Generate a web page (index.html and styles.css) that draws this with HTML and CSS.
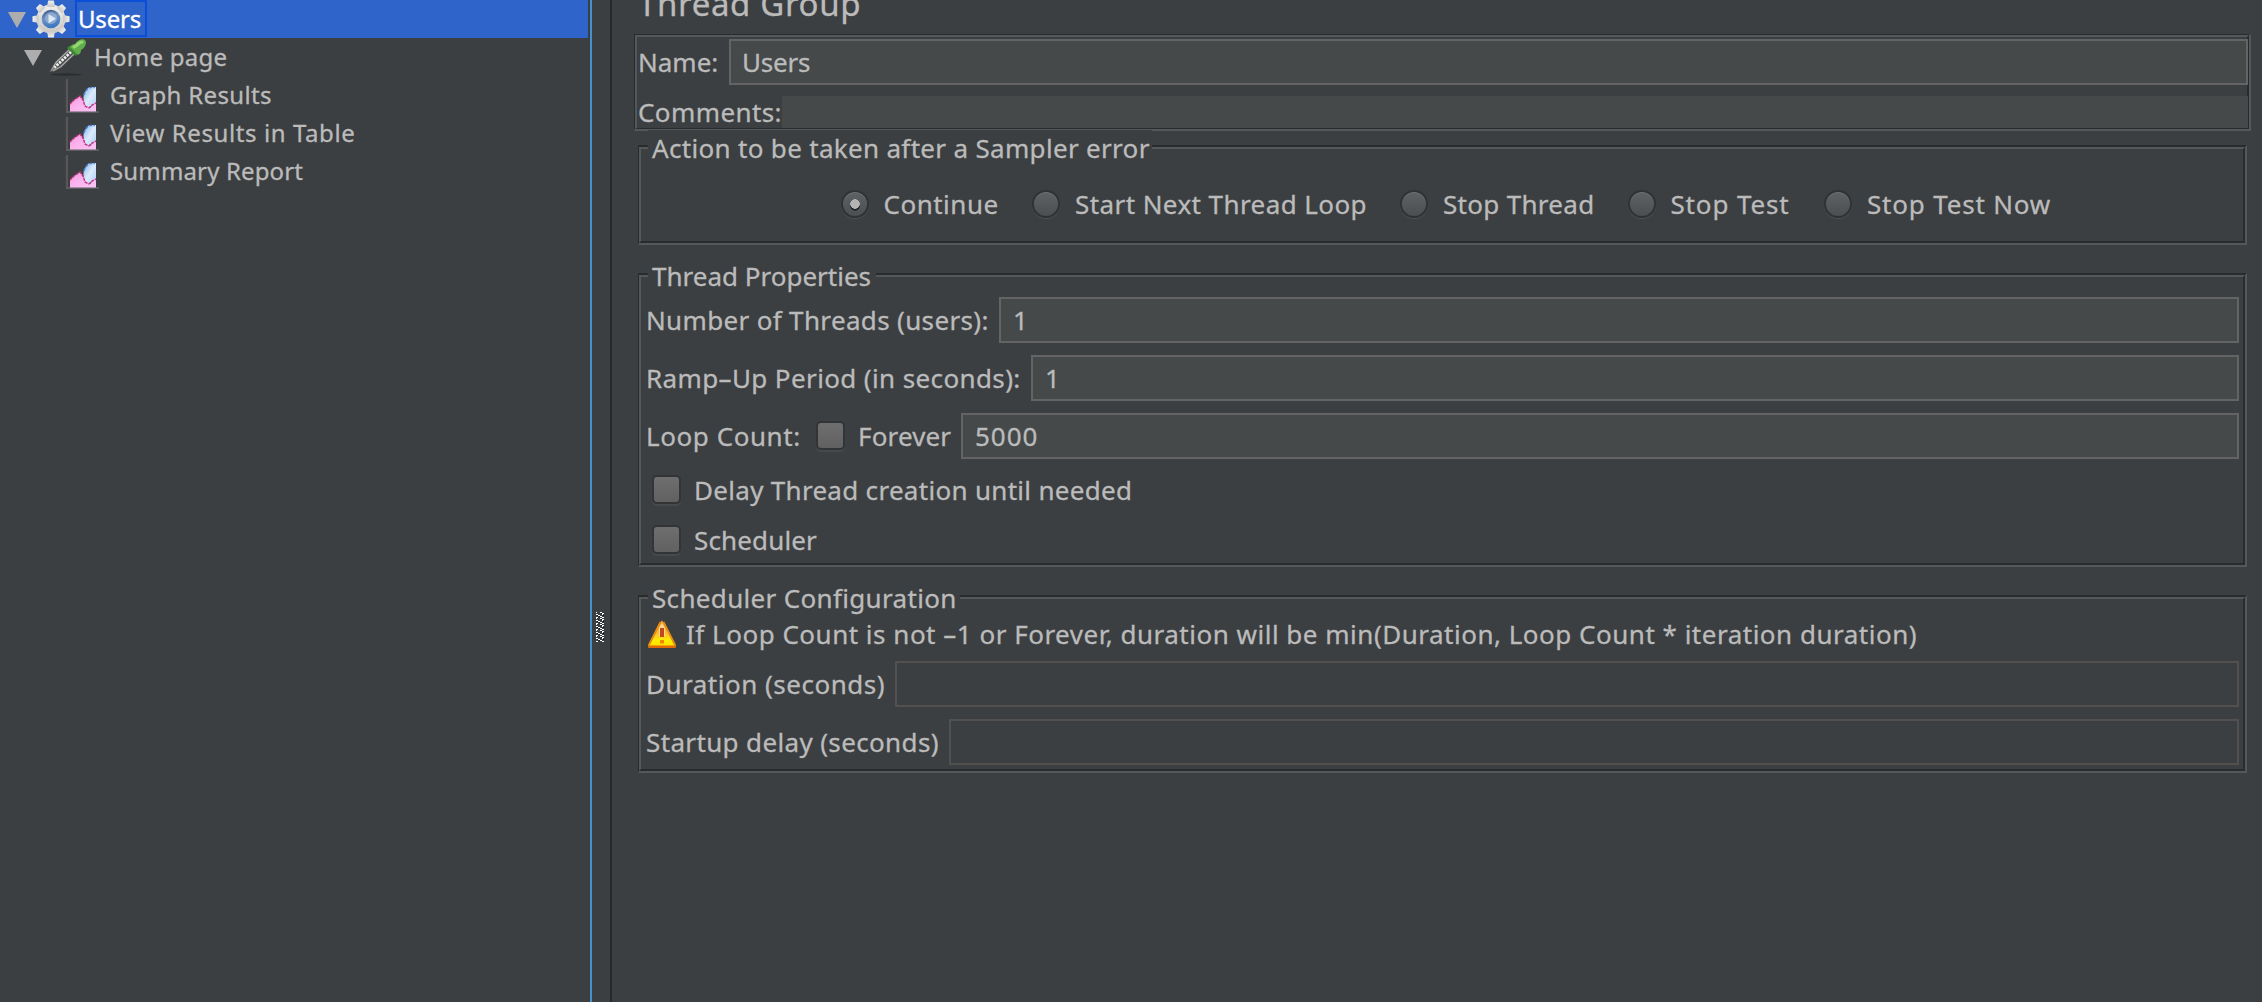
FILE: index.html
```
<!DOCTYPE html>
<html lang="en">
<head>
<meta charset="utf-8">
<title>Thread Group</title>
<link rel="stylesheet" href="styles.css">
</head>
<body>
<svg class="defs" aria-hidden="true">
  <defs>
    <linearGradient id="pinkFill" x1="0" y1="0" x2="1" y2="1"><stop offset="0" stop-color="#f59ade"/><stop offset=".5" stop-color="#fbb4ee"/><stop offset="1" stop-color="#f7c6f4"/></linearGradient>
    <linearGradient id="blueFill" x1="0" y1="0" x2="1" y2="1"><stop offset="0" stop-color="#7fb4ee"/><stop offset=".5" stop-color="#dceafb"/><stop offset="1" stop-color="#a9cdf6"/></linearGradient>
    <linearGradient id="gearFill" x1="0" y1="0" x2="0" y2="1"><stop offset="0" stop-color="#f0f0ee"/><stop offset="1" stop-color="#c9c8c5"/></linearGradient>
    <linearGradient id="hubFill" x1="0" y1="0" x2=".3" y2="1"><stop offset="0" stop-color="#34507f"/><stop offset=".5" stop-color="#6f93c4"/><stop offset="1" stop-color="#3c78c0"/></linearGradient>
    <linearGradient id="warnFill" x1="0" y1="0" x2="0" y2="1"><stop offset="0" stop-color="#f7a031"/><stop offset=".5" stop-color="#fdc02c"/><stop offset=".75" stop-color="#fff000"/><stop offset="1" stop-color="#ffd800"/></linearGradient>
    <symbol id="chart" viewBox="0 0 36 36">
      <path d="M3 1V34M2 34H35" stroke="#5c5a5d" stroke-width="1.800" fill="none"/>
      <path d="M1 4h2M1 8h2M1 12h2M1 16h2M1 20h2M1 24h2M1 28h2" stroke="#505254" stroke-width="1"/>
      <path d="M19.500 20c0-5 3-8 5-10.500L32 9v17l-8 4c-3-2-4.500-6-4.500-10z" fill="url(#blueFill)"/>
      <path d="M20 17c1-4 4-7.500 7-7.500h4" stroke="#4d86d8" stroke-width="1.500" stroke-dasharray="3 1.500" fill="none"/>
      <path d="M6 33.500V26l4-4 6-4 3 4 3 6 4 2 3-3 3-3v9.500z" fill="url(#pinkFill)"/>
      <path d="M6 26l4-4 6-4 3 4 2 6 4 2 3-3 4-2" stroke="#c2327f" stroke-width="1.400" stroke-dasharray="3 1" fill="none"/>
    </symbol>
  </defs>
</svg>
<div class="app">
  <nav class="tree">
    <div class="node node-root selected">
      <i class="arrow"></i>
      <svg class="icon gear" viewBox="0 0 38 38">
        <g fill="url(#gearFill)">
          <circle cx="19" cy="19" r="14.500"/>
          <path id="tooth" d="M14.900 7l1.300-6.500h5.600l1.300 6.500z"/>
          <use href="#tooth" transform="rotate(45 19 19)"/>
          <use href="#tooth" transform="rotate(90 19 19)"/>
          <use href="#tooth" transform="rotate(135 19 19)"/>
          <use href="#tooth" transform="rotate(180 19 19)"/>
          <use href="#tooth" transform="rotate(225 19 19)"/>
          <use href="#tooth" transform="rotate(270 19 19)"/>
          <use href="#tooth" transform="rotate(315 19 19)"/>
        </g>
        <circle cx="19" cy="19" r="9.300" fill="url(#hubFill)"/>
        <circle cx="19" cy="18" r="6" fill="#a9bfdd" opacity=".6"/>
        <path d="M16.500 14l7.500 4.700-7.500 4.600z" fill="#dfe8f5"/>
      </svg>
      <span class="name t-root">Users</span>
    </div>
    <div class="node node-page">
      <i class="arrow"></i>
      <svg class="icon dropper" viewBox="0 0 38 38">
        <ellipse cx="18" cy="36.500" rx="16" ry="1.200" fill="#2b2d2f"/>
        <path d="M2 33l5-9L21 10l6 6-14 14-9 4z" fill="#4a4c4d"/>
        <path d="M3.500 32L8 24.500 21.500 11.500M5 33l8-4.500L26 16" stroke="#a9aaa9" stroke-width="1.300" fill="none"/>
        <path d="M6 30L24 13" stroke="#eeeeec" stroke-width="2.800" stroke-dasharray="2.500 1" fill="none"/>
        <path d="M1.500 34l4-5.500 2.500 2.500z" fill="#8b8c8a"/>
        <path d="M19 10l3-2.500 8 8-2.500 2.500z" fill="#3d8a35"/>
        <path d="M22 9c1-2 3-3 5-3 2-4 8-6 10-4s1 7-4 10c0 2-1 4-3 5z" fill="#5fae4b"/>
        <path d="M26 9c3-1 4-4 8-5" stroke="#97d672" stroke-width="3" stroke-linecap="round" fill="none"/>
      </svg>
      <span class="name t-home">Home page</span>
    </div>
    <div class="node node-leaf"><svg class="icon chart"><use href="#chart"/></svg><span class="name t-graph">Graph Results</span></div>
    <div class="node node-leaf"><svg class="icon chart"><use href="#chart"/></svg><span class="name t-view">View Results in Table</span></div>
    <div class="node node-leaf"><svg class="icon chart"><use href="#chart"/></svg><span class="name t-summary">Summary Report</span></div>
  </nav>
  <div class="splitter">
    <svg class="grip" viewBox="0 0 8 30" shape-rendering="crispEdges">
      <defs><pattern id="gripDots" width="8" height="6" patternUnits="userSpaceOnUse">
        <path d="M4 0h2v1H4zM6 1h2v1H6zM0 2h2v1H0zM6 2h1v1H6zM2 3h2v1H2zM4 4h2v1H4zM0 5h2v1H0zM6 5h2v1H6zM0 0h1v1H0z" fill="#fff"/>
        <path d="M5 1h1v1H5zM1 3h1v1H1zM3 4h1v1H3zM7 3h1v1H7z" fill="#111"/>
      </pattern></defs>
      <rect width="8" height="30" fill="url(#gripDots)"/>
    </svg>
  </div>
  <main class="panel">
    <h1 class="title">Thread Group</h1>
    <section class="etched frame">
      <div class="row"><span class="label l-name">Name:</span><div class="field f-name">Users</div></div>
      <div class="row comments"><span class="label l-comments">Comments:</span><div class="plain-field"></div></div>
    </section>
    <section class="etched group g-action">
      <h2 class="legend lg-action">Action to be taken after a Sampler error</h2>
      <div class="radios">
        <span class="radio r-continue"><i class="dot on"></i>Continue</span>
        <span class="radio r-next"><i class="dot"></i>Start Next Thread Loop</span>
        <span class="radio r-thread"><i class="dot"></i>Stop Thread</span>
        <span class="radio r-test"><i class="dot"></i>Stop Test</span>
        <span class="radio r-now"><i class="dot"></i>Stop Test Now</span>
      </div>
    </section>
    <section class="etched group g-props">
      <h2 class="legend lg-props">Thread Properties</h2>
      <div class="rows">
        <div class="row"><span class="label l-threads">Number of Threads (users):</span><div class="field">1</div></div>
        <div class="row"><span class="label l-ramp">Ramp–Up Period (in seconds):</span><div class="field">1</div></div>
        <div class="row"><span class="label l-loop">Loop Count:</span><i class="check"></i><span class="label l-forever">Forever</span><div class="field loops">5000</div></div>
      </div>
      <div class="option"><i class="check"></i><span class="l-delay">Delay Thread creation until needed</span></div>
      <div class="option"><i class="check"></i><span class="l-sched">Scheduler</span></div>
    </section>
    <section class="etched group g-sched">
      <h2 class="legend lg-sched">Scheduler Configuration</h2>
      <div class="warning">
        <svg class="warn-icon" viewBox="0 0 28 28">
          <path d="M14 .5L17 4 27.500 24.500V27.500H.5V24.500L11 4z" fill="url(#warnFill)"/>
          <path d="M12.500 2L1 25M15.500 2L27 25" stroke="#e88a12" stroke-width="1.800" fill="none"/>
          <path d="M14 3l3 5v8h-6V8z" fill="#fde0b0" opacity=".8"/>
          <path d="M12 8h4v9h-4z" fill="#c2481c"/>
          <path d="M12 20h4v3.500h-4z" fill="#ef8a00"/>
          <path d="M.5 25.500h27v2.500H.5z" fill="#e06a08"/>
        </svg>
        <span class="l-warn">If Loop Count is not –1 or Forever, duration will be min(Duration, Loop Count * iteration duration)</span>
      </div>
      <div class="rows">
        <div class="row"><span class="label l-duration">Duration (seconds)</span><div class="field disabled"></div></div>
        <div class="row"><span class="label l-startup">Startup delay (seconds)</span><div class="field disabled"></div></div>
      </div>
    </section>
  </main>
</div>
</body>
</html>
```
FILE: styles.css
```
* { box-sizing: border-box; }
body {
  margin: 0;
  height: 1002px;
  overflow: hidden;
  background: #3c3f41;
  color: #bbb;
  font: 26px/36px "Noto Sans", sans-serif;
  white-space: nowrap;
  -webkit-text-stroke: .3px currentColor;
}
.defs { position: absolute; width: 0; height: 0; }
.app { display: flex; height: 1002px; }

/* Tree */
.tree { width: 590px; flex: none; padding-right: 2px; font-size: 24px; }
.node { display: flex; align-items: center; height: 38px; }
.node-root { padding-left: 8px; }
.node-page { padding-left: 24px; }
.node-leaf { padding-left: 64px; }
.selected { background: #2f65ca; color: #fff; }
.arrow {
  width: 18px;
  height: 16px;
  margin-top: 2px;
  background: #adadad;
  clip-path: polygon(0 0, 100% 0, 50% 100%);
}
.icon { flex: none; width: 38px; height: 38px; }
.gear { margin-left: 6px; }
.dropper { margin-left: 6px; }
.chart { width: 36px; height: 36px; margin-top: 2px; }
.name { line-height: 34px; }
.t-root {
  width: 72px;
  height: 37px;
  margin: 0 0 1px 5px;
  padding-left: 1px;
  border: 2px solid #0b4fd8;
  letter-spacing: -.2px;
}
.t-home { margin-left: 8px; letter-spacing: .25px; }
.node-leaf .name { margin-left: 10px; }
.t-graph { letter-spacing: .35px; }
.t-view { letter-spacing: .6px; }
.t-summary { letter-spacing: .15px; }

/* Splitter */
.splitter {
  width: 22px;
  flex: none;
  border-left: 2px solid #4590cf;
  border-right: 2px solid #27292b;
  padding: 612px 0 0 4px;
}
.grip { display: block; width: 8px; height: 30px; }

/* Panel */
.panel { flex: 1; padding-left: 22px; }
.title {
  height: 62px;
  margin: -28px 0 0 4px;
  font-size: 33px;
  font-weight: 400;
  line-height: 63px;
  letter-spacing: .65px;
}
.etched {
  position: relative;
  border: 2px solid #555859;
  border-top-color: #292b2d;
  border-left: 1px solid #292b2d;
}
.etched::before {
  content: "";
  position: absolute;
  inset: 0;
  z-index: -1;
  border: 2px solid #292b2d;
  border-top-color: #555859;
  border-left-color: #555859;
}
.frame {
  width: 1617px;
  height: 97px;
  padding: 4px 1px 1px 3px;
  border-top-width: 1px;
}
.frame::before { border-bottom-width: 1px; }
.row { display: flex; align-items: center; height: 46px; }
.label { flex: none; }
.comments { height: 32px; margin-top: 11px; }
.field {
  flex: 1;
  height: 46px;
  padding-left: 12px;
  border: 2px solid #646464;
  background: #45494a;
  line-height: 42px;
}
.f-name { padding-left: 11px; letter-spacing: -.2px; }
.plain-field { flex: 1; height: 32px; background: #45494a; }
.field.disabled { border-color: #525150; background: #3c3f41; }
.field.loops { letter-spacing: 1px; }

.group { width: 1609px; margin-left: 4px; padding: 0 6px 0 7px; }
.g-action { height: 100px; margin-top: 14px; }
.g-props { height: 294px; margin-top: 28px; }
.g-sched { height: 178px; margin-top: 28px; }
.legend {
  height: 36px;
  margin: -17px 0 0 2px;
  padding-left: 4px;
  background: #3c3f41;
  font: inherit;
}
.rows { display: grid; gap: 12px; }
.g-props .rows { margin-top: 3px; }
.g-sched .rows { margin-top: 9px; }

/* Radio buttons */
.radios { display: flex; margin: 20px 0 0 194.5px; }
.radio { display: flex; align-items: center; }
.dot {
  width: 28px;
  height: 28px;
  margin-right: 15px;
  border: 2px solid #303234;
  border-radius: 50%;
  background: linear-gradient(#5e6265, #4b4f51);
  box-shadow: inset 0 1px 0 #6f7375, 0 1px 1px #505355;
}
.dot.on {
  background:
    radial-gradient(circle 5px at 50% 50%, #b4b4b4 90%, transparent),
    radial-gradient(circle 5px at 50% 58%, #222425 90%, transparent),
    linear-gradient(#5e6265, #4b4f51);
}
.r-continue { width: 191.5px; letter-spacing: .5px; }
.r-next { width: 368px; letter-spacing: .42px; }
.r-thread { width: 227.5px; letter-spacing: .3px; }
.r-test { width: 196.5px; letter-spacing: .85px; }
.r-now { letter-spacing: .82px; }

/* Check boxes */
.check {
  flex: none;
  width: 29px;
  height: 29px;
  margin-top: -1px;
  border: 2px solid #333436;
  border-radius: 5px;
  background: linear-gradient(#6e6e6e, #616161);
  box-shadow: 0 2px 1px #484b4d;
}
.option { display: flex; align-items: center; height: 36px; margin: 13px 0 0 6px; }
.option + .option { margin-top: 14px; }
.option span { margin-left: 13px; }

.warning { display: flex; align-items: center; height: 36px; padding-left: 2px; }
.warn-icon { width: 28px; height: 28px; margin-right: 10px; }

/* Label widths and tracking */
.l-name { width: 91px; letter-spacing: 0; }
.l-comments { width: 144px; letter-spacing: .4px; }
.lg-action { width: 504px; letter-spacing: .32px; }
.lg-props { width: 228px; letter-spacing: 0; }
.lg-sched { width: 312px; letter-spacing: .33px; }
.l-threads { width: 353px; letter-spacing: .34px; }
.l-ramp { width: 385px; letter-spacing: .38px; }
.l-loop { width: 170px; letter-spacing: .57px; }
.l-forever { width: 103px; margin-left: 13px; letter-spacing: .15px; }
.l-delay { letter-spacing: .3px; }
.l-sched { letter-spacing: .15px; }
.l-warn { letter-spacing: .505px; }
.l-duration { width: 249px; letter-spacing: .5px; }
.l-startup { width: 303px; letter-spacing: .36px; }
```
